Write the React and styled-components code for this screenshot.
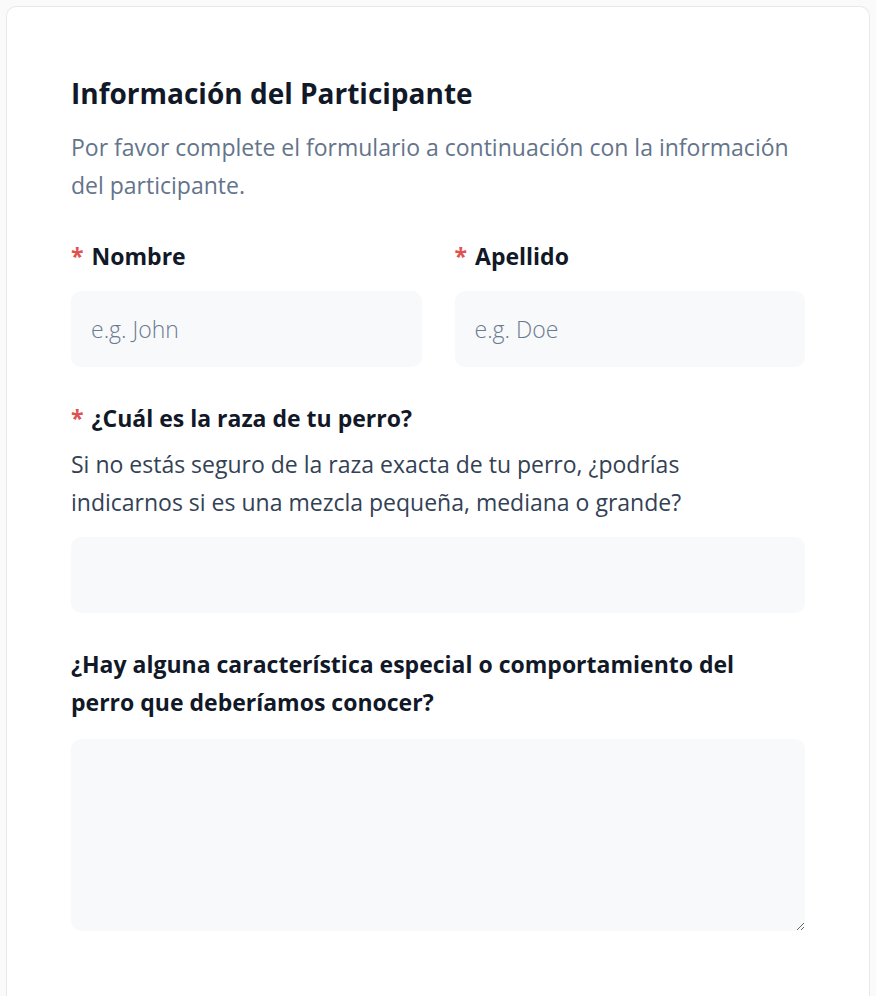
import React from 'react';
import styled, { createGlobalStyle } from 'styled-components';

const GlobalStyle = createGlobalStyle`
  * { box-sizing: border-box; }
  html, body {
    margin: 0;
    padding: 0;
    background: #fafafa;
    font-family: "Open Sans", "Noto Sans", sans-serif;
  }
`;

const Page = styled.div`
  padding: 6px 6px 0 6px;
  min-height: 996px;
  display: flex;
`;

const Card = styled.form`
  flex: 1;
  background: #ffffff;
  border: 1px solid #e6e8ec;
  border-bottom: none;
  border-radius: 10px 10px 0 0;
  padding: 68px 64px 64px 64px;
  display: flex;
  flex-direction: column;
`;

const Title = styled.h2`
  margin: 0 0 17px 0;
  font-size: 28px;
  line-height: 36px;
  font-weight: 700;
  color: #111827;
`;

const Subtitle = styled.p`
  margin: 0 0 33px 0;
  font-size: 23px;
  line-height: 38px;
  font-weight: 400;
  color: #64748b;
`;

const Row = styled.div`
  display: grid;
  grid-template-columns: 1fr 1fr;
  gap: 33px;
`;

const Field = styled.div`
  display: flex;
  flex-direction: column;
  margin-bottom: ${(p) => (p.$last ? '0' : '32px')};
`;

const Label = styled.label`
  font-size: 23px;
  line-height: 38px;
  font-weight: 700;
  color: #111827;
  max-width: 700px;
`;

const Star = styled.span`
  color: #e0524f;
  margin-right: 8px;
`;

const Hint = styled.p`
  margin: 8px 0 0 0;
  font-size: 23px;
  line-height: 38px;
  color: #334155;
  max-width: 690px;
`;

const Input = styled.input`
  margin-top: 16px;
  height: 76px;
  width: 100%;
  border: none;
  border-radius: 10px;
  background: #f8f9fb;
  padding: 0 20px;
  font-family: inherit;
  font-size: 23px;
  font-weight: 300;
  color: #111827;
  outline: none;

  &::placeholder {
    color: #6b7a90;
  }
`;

const TextArea = styled.textarea`
  margin-top: 18px;
  height: 192px;
  width: 100%;
  border: none;
  border-radius: 10px;
  background: #f8f9fb;
  padding: 20px;
  font-family: inherit;
  font-size: 23px;
  color: #111827;
  outline: none;
  resize: vertical;
`;

const App = () => {
  return (
    <>
      <GlobalStyle />
      <Page>
        <Card onSubmit={(e) => e.preventDefault()}>
          <Title>Información del Participante</Title>
          <Subtitle>
            Por favor complete el formulario a continuación con la información del participante.
          </Subtitle>

          <Row>
            <Field>
              <Label htmlFor="nombre"><Star>*</Star>Nombre</Label>
              <Input id="nombre" placeholder="e.g. John" />
            </Field>
            <Field>
              <Label htmlFor="apellido"><Star>*</Star>Apellido</Label>
              <Input id="apellido" placeholder="e.g. Doe" />
            </Field>
          </Row>

          <Field>
            <Label htmlFor="raza"><Star>*</Star>¿Cuál es la raza de tu perro?</Label>
            <Hint>
              Si no estás seguro de la raza exacta de tu perro, ¿podrías indicarnos si es una mezcla pequeña, mediana o grande?
            </Hint>
            <Input id="raza" />
          </Field>

          <Field $last>
            <Label htmlFor="caracteristicas">
              ¿Hay alguna característica especial o comportamiento del perro que deberíamos conocer?
            </Label>
            <TextArea id="caracteristicas" />
          </Field>
        </Card>
      </Page>
    </>
  );
};

export default App;
